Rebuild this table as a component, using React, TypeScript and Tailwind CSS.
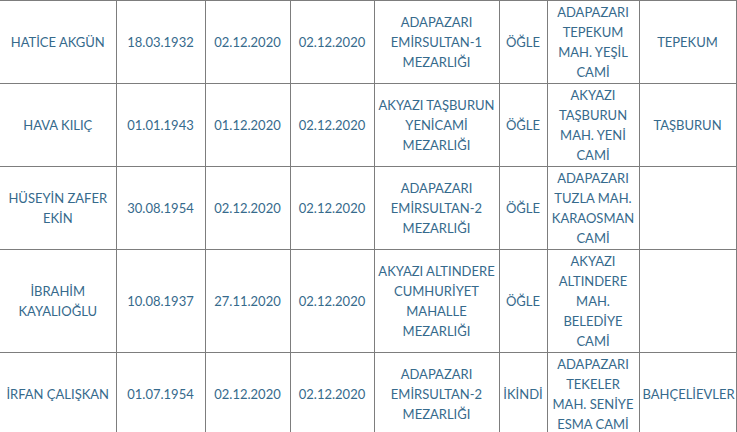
type Row = {
  name: string;
  birth: string;
  death: string;
  burial: string;
  cemetery: string;
  prayer: string;
  mosque: string;
  district: string;
};

const rows: Row[] = [
  {
    name: "HATİCE AKGÜN",
    birth: "18.03.1932",
    death: "02.12.2020",
    burial: "02.12.2020",
    cemetery: "ADAPAZARI EMİRSULTAN-1 MEZARLIĞI",
    prayer: "ÖĞLE",
    mosque: "ADAPAZARI TEPEKUM MAH. YEŞİL CAMİ",
    district: "TEPEKUM",
  },
  {
    name: "HAVA KILIÇ",
    birth: "01.01.1943",
    death: "01.12.2020",
    burial: "02.12.2020",
    cemetery: "AKYAZI TAŞBURUN YENİCAMİ MEZARLIĞI",
    prayer: "ÖĞLE",
    mosque: "AKYAZI TAŞBURUN MAH. YENİ CAMİ",
    district: "TAŞBURUN",
  },
  {
    name: "HÜSEYİN ZAFER EKİN",
    birth: "30.08.1954",
    death: "02.12.2020",
    burial: "02.12.2020",
    cemetery: "ADAPAZARI EMİRSULTAN-2 MEZARLIĞI",
    prayer: "ÖĞLE",
    mosque: "ADAPAZARI TUZLA MAH. KARAOSMAN CAMİ",
    district: "",
  },
  {
    name: "İBRAHİM KAYALIOĞLU",
    birth: "10.08.1937",
    death: "27.11.2020",
    burial: "02.12.2020",
    cemetery: "AKYAZI ALTINDERE CUMHURİYET MAHALLE MEZARLIĞI",
    prayer: "ÖĞLE",
    mosque: "AKYAZI ALTINDERE MAH. BELEDİYE CAMİ",
    district: "",
  },
  {
    name: "İRFAN ÇALIŞKAN",
    birth: "01.07.1954",
    death: "02.12.2020",
    burial: "02.12.2020",
    cemetery: "ADAPAZARI EMİRSULTAN-2 MEZARLIĞI",
    prayer: "İKİNDİ",
    mosque: "ADAPAZARI TEKELER MAH. SENİYE ESMA CAMİ",
    district: "BAHÇELİEVLER",
  },
];

const cell =
  "border-r border-b border-[#7d7d7d] px-[3px] py-px text-center align-middle";

export default function App() {
  return (
    <div
      className="w-[737px] h-[432px] overflow-hidden bg-white text-[13px] leading-[20px] text-[#366a8c]"
      style={{ fontFamily: "Lato, 'Liberation Sans', sans-serif" }}
    >
      <table className="w-[736px] table-fixed border-collapse border-t border-[#7d7d7d]">
        <colgroup>
          <col className="w-[116px]" />
          <col className="w-[89px]" />
          <col className="w-[85px]" />
          <col className="w-[84px]" />
          <col className="w-[125px]" />
          <col className="w-[48px]" />
          <col className="w-[92px]" />
          <col className="w-[97px]" />
        </colgroup>
        <tbody>
          {rows.map((r) => (
            <tr key={r.name}>
              <td className={cell}>{r.name}</td>
              <td className={cell}>{r.birth}</td>
              <td className={cell}>{r.death}</td>
              <td className={cell}>{r.burial}</td>
              <td className={cell}>{r.cemetery}</td>
              <td className={cell}>{r.prayer}</td>
              <td className={cell}>{r.mosque}</td>
              <td className={`${cell} px-0`}>{r.district}</td>
            </tr>
          ))}
        </tbody>
      </table>
    </div>
  );
}
